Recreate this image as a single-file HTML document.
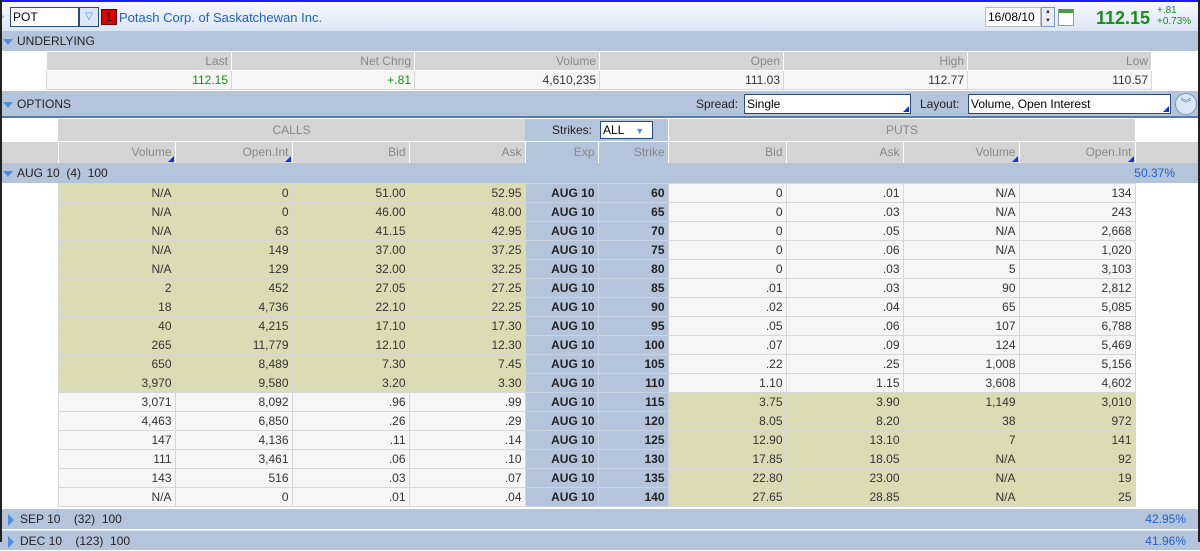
<!DOCTYPE html>
<html><head><meta charset="utf-8"><style>
*{box-sizing:border-box;margin:0;padding:0}
body{width:1200px;height:542px;overflow:hidden;background:#fff;font-family:"Liberation Sans",sans-serif;font-size:12px;color:#333;position:relative}
.a{position:absolute}
.top{left:0;top:0;width:1200px;height:31px;background:linear-gradient(#f6f9fe,#dbe6f6);border-top:2px solid #1a1aff}
.sec{left:0;width:1200px;background:#b4c4da;color:#222;font-size:12px}
.tri{display:inline-block;width:0;height:0;border-left:5px solid transparent;border-right:5px solid transparent;border-top:6px solid #4a90e0;margin:0 4px 0 3px;vertical-align:middle}
.tr{display:inline-block;width:0;height:0;border-top:6px solid transparent;border-bottom:6px solid transparent;border-left:6px solid #4a90e0;margin:0 6px 0 8px;vertical-align:middle}
table{border-collapse:collapse;table-layout:fixed;position:absolute}
td{height:19px;border:1px solid #d6d6d6;text-align:right;padding:0 3px 0 0;white-space:nowrap;overflow:hidden;font-size:12px;line-height:17px}
td.e{border:none;background:#fff}
td.y{background:#dcdcb4}
td.w{background:#f6f6f6}
td.b{background:#b4c4da;font-weight:bold;color:#222;border-color:#c8d4e4}
.hd td{background:#d4d4d4;color:#888;border-color:#fff;position:relative}
.hd td.b{background:#b4c4da;font-weight:normal;color:#888}
.corner:after{content:"";position:absolute;right:1px;bottom:1px;border-left:6px solid transparent;border-bottom:6px solid #1030e0}
.inp{background:#fff;border:1px solid #2a4a80;font-size:12px;line-height:16px;padding-left:2px;color:#000}
</style></head><body>
<div class="a top">
 <div class="a" style="left:0;top:9px;color:#4a90e0;font-size:9px">▹</div>
 <div class="a inp" style="left:10px;top:5px;width:69px;height:20px;line-height:18px">POT</div>
 <div class="a" style="left:79px;top:5px;width:20px;height:20px;border:1px solid #2a4a80;background:#dbe6f6;color:#4a90e0;text-align:center;font-size:10px;line-height:18px">▽</div>
 <div class="a" style="left:101px;top:7px;width:16px;height:16px;background:#d00;border:1px solid #600;color:#000;text-align:center;line-height:14px">1</div>
 <div class="a" style="left:119px;top:8px;color:#2060d0;font-size:13px">Potash Corp. of Saskatchewan Inc.</div>
 <div class="a inp" style="left:985px;top:5px;width:56px;height:20px;line-height:18px;border-color:#bbb">16/08/10</div>
 <div class="a" style="left:1041px;top:5px;width:14px;height:20px;border:1px solid #7a9ac0;background:#e8eef8;font-size:6px;text-align:center;line-height:9px;color:#333">▲<br>▼</div>
 <div class="a" style="left:1058px;top:7px;width:16px;height:17px;border:1px solid #999;background:#fff;border-top:4px solid #4a9a4a"></div>
 <div class="a" style="left:1096px;top:6px;color:#1a8a1a;font-size:18px;font-weight:bold">112.15</div>
 <div class="a" style="left:1157px;top:3px;color:#1a8a1a;font-size:10px;line-height:11px">+.81<br>+0.73%</div>
</div>
<div class="a sec" style="top:31px;height:20px;line-height:20px"><span class="tri"></span>UNDERLYING</div>
<table style="left:46px;top:51px;width:1105px">
<colgroup><col style="width:185px"><col style="width:183px"><col style="width:185px"><col style="width:184px"><col style="width:184px"><col style="width:184px"></colgroup>
<tr class="hd"><td>Last</td><td>Net Chng</td><td>Volume</td><td>Open</td><td>High</td><td>Low</td></tr>
<tr><td class="w" style="color:#1a8a1a">112.15</td><td class="w" style="color:#1a8a1a">+.81</td><td class="w">4,610,235</td><td class="w">111.03</td><td class="w">112.77</td><td class="w">110.57</td></tr>
</table>
<div class="a sec" style="top:91px;height:27px;line-height:27px;border-bottom:2px solid #5a7aa8"><span class="tri"></span>OPTIONS
 <div class="a" style="left:696px;top:0">Spread:</div>
 <div class="a inp corner" style="left:744px;top:3px;width:167px;height:20px;line-height:18px">Single</div>
 <div class="a" style="left:920px;top:0">Layout:</div>
 <div class="a inp corner" style="left:968px;top:3px;width:203px;height:20px;line-height:18px">Volume, Open Interest</div>
 <div class="a" style="left:1175px;top:2px;width:22px;height:22px;border-radius:50%;border:1px solid #7a9ac0;background:#dbe6f6;color:#4a80d0;text-align:center;line-height:20px;font-size:11px">︾</div>
</div>
<div class="a" style="left:58px;top:119px;width:467px;height:22px;background:#d4d4d4;color:#888;text-align:center;line-height:22px">CALLS</div>
<div class="a" style="left:525px;top:119px;width:143px;height:22px;background:#b4c4da;color:#222;line-height:22px;padding-left:27px">Strikes:</div>
<div class="a inp" style="left:600px;top:121px;width:53px;height:18px">ALL <span style="color:#4a90e0;font-size:9px;margin-left:8px">▼</span></div>
<div class="a" style="left:669px;top:119px;width:466px;height:22px;background:#d4d4d4;color:#888;text-align:center;line-height:22px">PUTS</div>
<table style="left:0;top:141px;width:1200px">
<colgroup><col style="width:28px"><col style="width:30px"><col style="width:117px"><col style="width:117px"><col style="width:117px"><col style="width:116px"><col style="width:73px"><col style="width:70px"><col style="width:118px"><col style="width:117px"><col style="width:116px"><col style="width:116px"><col style="width:33px"><col style="width:32px"></colgroup>
<tr class="hd" style="height:22px"><td class="e"></td><td class="e"></td><td class="corner">Volume</td><td class="corner">Open.Int</td><td>Bid</td><td>Ask</td><td class="b">Exp</td><td class="b">Strike</td><td>Bid</td><td>Ask</td><td class="corner">Volume</td><td class="corner">Open.Int</td><td class="e"></td><td class="e"></td></tr>
</table>
<div class="a sec" style="top:163px;height:20px;line-height:20px"><span class="tri"></span>AUG 10 &nbsp;(4) &nbsp;100<span class="a" style="right:25px;top:0;color:#2060d0">50.37%</span></div>
<table style="left:0;top:183px;width:1200px">
<colgroup><col style="width:58px"><col style="width:117px"><col style="width:117px"><col style="width:117px"><col style="width:116px"><col style="width:73px"><col style="width:70px"><col style="width:118px"><col style="width:117px"><col style="width:116px"><col style="width:116px"><col style="width:65px"></colgroup>
<tr><td class="e"></td><td class="y">N/A</td><td class="y">0</td><td class="y">51.00</td><td class="y">52.95</td><td class="b">AUG 10</td><td class="b">60</td><td class="w">0</td><td class="w">.01</td><td class="w">N/A</td><td class="w">134</td><td class="e"></td></tr>
<tr><td class="e"></td><td class="y">N/A</td><td class="y">0</td><td class="y">46.00</td><td class="y">48.00</td><td class="b">AUG 10</td><td class="b">65</td><td class="w">0</td><td class="w">.03</td><td class="w">N/A</td><td class="w">243</td><td class="e"></td></tr>
<tr><td class="e"></td><td class="y">N/A</td><td class="y">63</td><td class="y">41.15</td><td class="y">42.95</td><td class="b">AUG 10</td><td class="b">70</td><td class="w">0</td><td class="w">.05</td><td class="w">N/A</td><td class="w">2,668</td><td class="e"></td></tr>
<tr><td class="e"></td><td class="y">N/A</td><td class="y">149</td><td class="y">37.00</td><td class="y">37.25</td><td class="b">AUG 10</td><td class="b">75</td><td class="w">0</td><td class="w">.06</td><td class="w">N/A</td><td class="w">1,020</td><td class="e"></td></tr>
<tr><td class="e"></td><td class="y">N/A</td><td class="y">129</td><td class="y">32.00</td><td class="y">32.25</td><td class="b">AUG 10</td><td class="b">80</td><td class="w">0</td><td class="w">.03</td><td class="w">5</td><td class="w">3,103</td><td class="e"></td></tr>
<tr><td class="e"></td><td class="y">2</td><td class="y">452</td><td class="y">27.05</td><td class="y">27.25</td><td class="b">AUG 10</td><td class="b">85</td><td class="w">.01</td><td class="w">.03</td><td class="w">90</td><td class="w">2,812</td><td class="e"></td></tr>
<tr><td class="e"></td><td class="y">18</td><td class="y">4,736</td><td class="y">22.10</td><td class="y">22.25</td><td class="b">AUG 10</td><td class="b">90</td><td class="w">.02</td><td class="w">.04</td><td class="w">65</td><td class="w">5,085</td><td class="e"></td></tr>
<tr><td class="e"></td><td class="y">40</td><td class="y">4,215</td><td class="y">17.10</td><td class="y">17.30</td><td class="b">AUG 10</td><td class="b">95</td><td class="w">.05</td><td class="w">.06</td><td class="w">107</td><td class="w">6,788</td><td class="e"></td></tr>
<tr><td class="e"></td><td class="y">265</td><td class="y">11,779</td><td class="y">12.10</td><td class="y">12.30</td><td class="b">AUG 10</td><td class="b">100</td><td class="w">.07</td><td class="w">.09</td><td class="w">124</td><td class="w">5,469</td><td class="e"></td></tr>
<tr><td class="e"></td><td class="y">650</td><td class="y">8,489</td><td class="y">7.30</td><td class="y">7.45</td><td class="b">AUG 10</td><td class="b">105</td><td class="w">.22</td><td class="w">.25</td><td class="w">1,008</td><td class="w">5,156</td><td class="e"></td></tr>
<tr><td class="e"></td><td class="y">3,970</td><td class="y">9,580</td><td class="y">3.20</td><td class="y">3.30</td><td class="b">AUG 10</td><td class="b">110</td><td class="w">1.10</td><td class="w">1.15</td><td class="w">3,608</td><td class="w">4,602</td><td class="e"></td></tr>
<tr><td class="e"></td><td class="w">3,071</td><td class="w">8,092</td><td class="w">.96</td><td class="w">.99</td><td class="b">AUG 10</td><td class="b">115</td><td class="y">3.75</td><td class="y">3.90</td><td class="y">1,149</td><td class="y">3,010</td><td class="e"></td></tr>
<tr><td class="e"></td><td class="w">4,463</td><td class="w">6,850</td><td class="w">.26</td><td class="w">.29</td><td class="b">AUG 10</td><td class="b">120</td><td class="y">8.05</td><td class="y">8.20</td><td class="y">38</td><td class="y">972</td><td class="e"></td></tr>
<tr><td class="e"></td><td class="w">147</td><td class="w">4,136</td><td class="w">.11</td><td class="w">.14</td><td class="b">AUG 10</td><td class="b">125</td><td class="y">12.90</td><td class="y">13.10</td><td class="y">7</td><td class="y">141</td><td class="e"></td></tr>
<tr><td class="e"></td><td class="w">111</td><td class="w">3,461</td><td class="w">.06</td><td class="w">.10</td><td class="b">AUG 10</td><td class="b">130</td><td class="y">17.85</td><td class="y">18.05</td><td class="y">N/A</td><td class="y">92</td><td class="e"></td></tr>
<tr><td class="e"></td><td class="w">143</td><td class="w">516</td><td class="w">.03</td><td class="w">.07</td><td class="b">AUG 10</td><td class="b">135</td><td class="y">22.80</td><td class="y">23.00</td><td class="y">N/A</td><td class="y">19</td><td class="e"></td></tr>
<tr><td class="e"></td><td class="w">N/A</td><td class="w">0</td><td class="w">.01</td><td class="w">.04</td><td class="b">AUG 10</td><td class="b">140</td><td class="y">27.65</td><td class="y">28.85</td><td class="y">N/A</td><td class="y">25</td><td class="e"></td></tr>
</table>
<div class="a sec" style="top:509px;height:20px;line-height:20px"><span class="tr"></span>SEP 10 &nbsp;&nbsp;&nbsp;(32) &nbsp;100<span class="a" style="right:14px;top:0;color:#2060d0">42.95%</span></div>
<div class="a sec" style="top:530px;height:20px;line-height:20px;border-top:1px solid #dde6f0"><span class="tr"></span>DEC 10 &nbsp;&nbsp;&nbsp;(123) &nbsp;100<span class="a" style="right:14px;top:0;color:#2060d0">41.96%</span></div>
<div class="a" style="left:0;top:0;width:2px;height:542px;background:#222"></div>
<div class="a" style="right:0;top:0;width:2px;height:542px;background:#222"></div>
</body></html>
